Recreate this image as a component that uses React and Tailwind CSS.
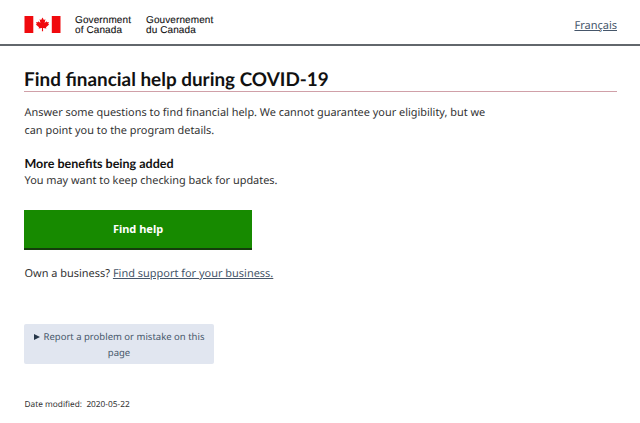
export default function App() {
  return (
    <div className="h-[423px] w-[640px] overflow-hidden bg-white font-['Noto_Sans',sans-serif] text-[#333] [text-rendering:geometricPrecision]">
      <header className="flex h-[46px] items-start justify-between border-b-2 border-[#62676c] pl-[24px] pr-[23px]">
        <div className="flex pt-[16px]">
          <svg className="block h-[17px] w-[37px]" viewBox="0 0 37 17">
            <path fill="#f00a0e" d="M.5 0h8.800v17H.5zM27.800 0h8.700v17h-8.700z" />
            <path fill="#f00a0e" d="M18.500 1.500l-1.400 2.500-1.500-.7.800 3.700-1.900-1.800-.5 1-1.900-.3.700 2.100-1 .6 3.200 2.700-.4 1.200 3.400-.4-.1 3.100h1.200l-.1-3.100 3.400.4-.4-1.200 3.200-2.700-1-.6.700-2.100-1.900.3-.5-1-1.900 1.800.8-3.700-1.500.7z" />
          </svg>
          <div className="ml-[14px] w-[71px] whitespace-nowrap font-['Liberation_Sans',sans-serif] text-[10px] leading-[10px] tracking-[0.1px] text-[#111] [-webkit-text-stroke:0.1px_#111]">Government<br />of Canada</div>
          <div className="whitespace-nowrap font-['Liberation_Sans',sans-serif] text-[10px] leading-[10px] tracking-[0.1px] text-[#111] [-webkit-text-stroke:0.1px_#111]">Gouvernement<br />du Canada</div>
        </div>
        <a className="pt-[17px] text-[11px] leading-[17px] text-[#46566a] underline">Français</a>
      </header>
      <main className="pl-[24px] pr-[23px] pt-[21px]">
        <h1 className="h-[25px] whitespace-nowrap border-b border-[#d0a0a8] font-['Lato',sans-serif] text-[18.900px] font-bold leading-[26px] text-[#111]">Find financial help during COVID-19</h1>
        <p className="mt-[12px] whitespace-nowrap pl-[0.500px] text-[10.920px] leading-[18px]">Answer some questions to find financial help. We cannot guarantee your eligibility, but we<br />can point you to the program details.</p>
        <h2 className="mt-[15px] pl-[0.500px] font-['Lato',sans-serif] text-[12.500px] font-bold leading-[17px] text-[#111]">More benefits being added</h2>
        <p className="pl-[0.500px] text-[10.920px] leading-[17px]">You may want to keep checking back for updates.</p>
        <button className="mt-[21px] block h-[40px] w-[228px] border-b-2 border-[#143c0c] bg-[#178a00] text-[11px] font-bold text-white">Find help</button>
        <p className="mt-[15px] pl-[0.500px] text-[10.960px] leading-[18px]">Own a business? <a className="text-[#46566a] underline">Find support for your business.</a></p>
        <div className="mt-[41px] h-[40px] w-[190px] rounded-[2px] bg-[#e1e6f0] pt-[5px] text-center text-[9.500px] leading-[16px] text-[#46566a]"><svg className="mr-[4px] inline-block h-[6px] w-[6px] align-baseline" viewBox="0 0 6 6"><path fill="#26374a" d="M0 0l6 3-6 3z" /></svg>Report a problem or mistake on this<br />page</div>
        <p className="mt-[34px] pl-[0.500px] text-[8.300px] leading-[13px]">Date modified:&nbsp; 2020-05-22</p>
      </main>
    </div>
  );
}
